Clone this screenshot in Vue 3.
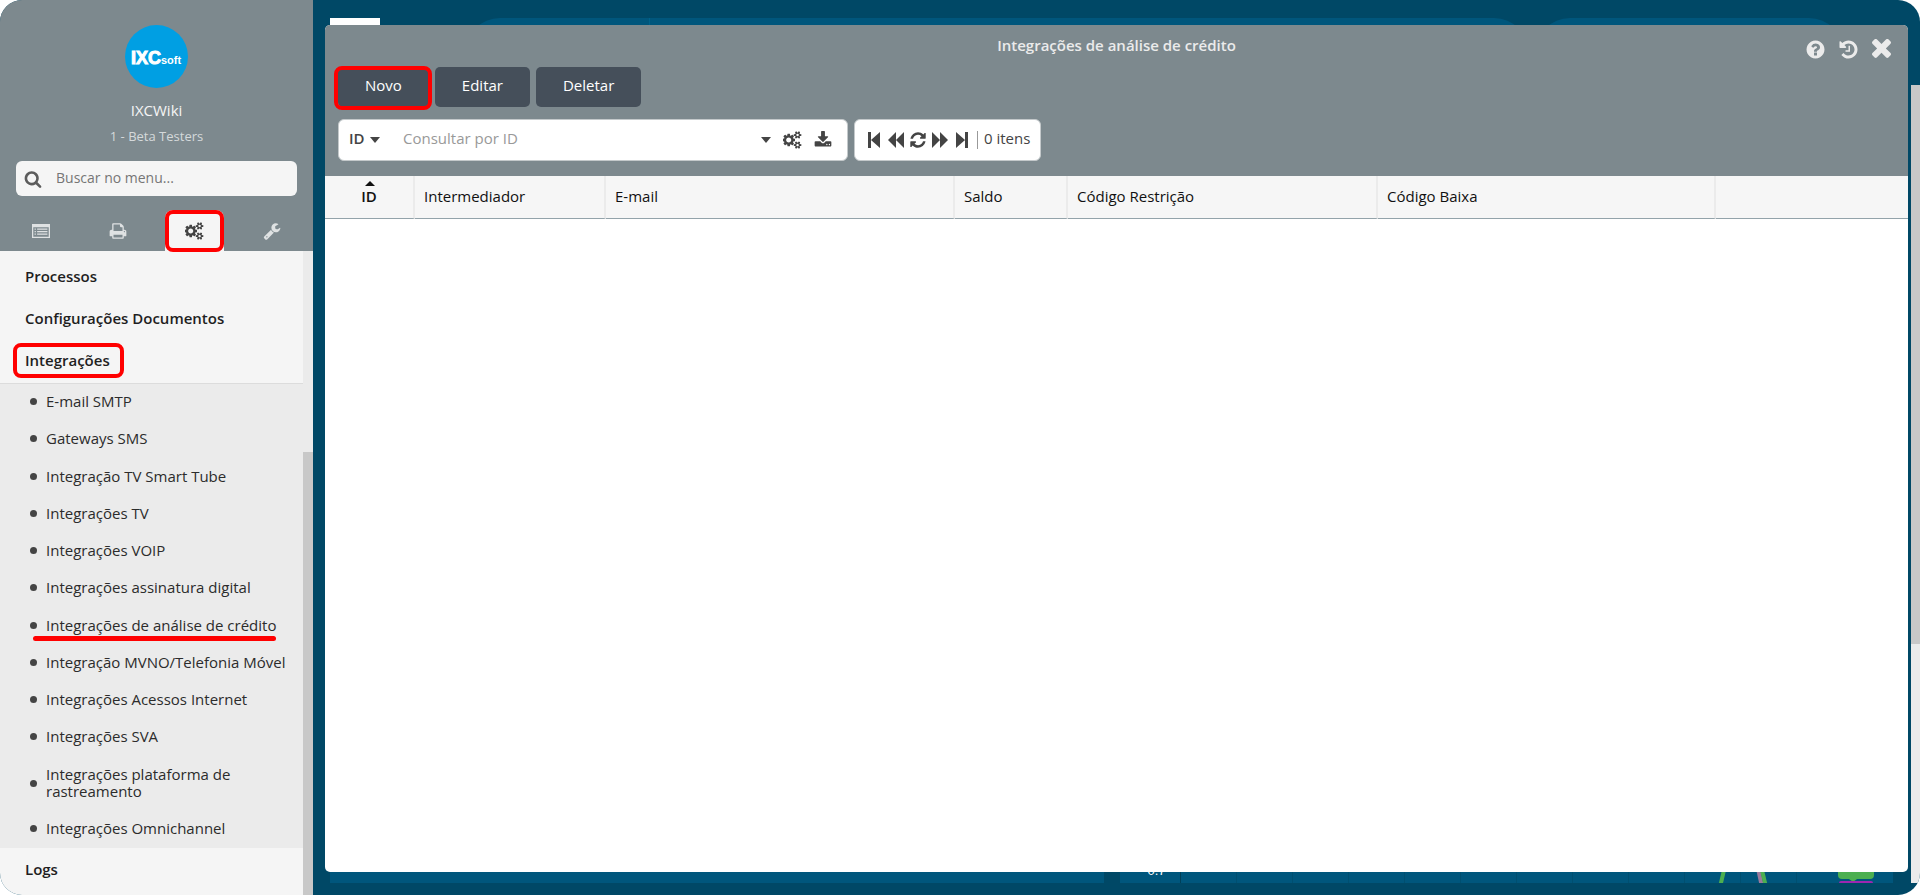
<script setup>
import { ref } from 'vue'

const cogs =
  'M832 896q0-106-75-181t-181-75-181 75-75 181 75 181 181 75 181-75 75-181zm768 512q0-52-38-90t-90-38-90 38-38 90q0 53 37.5 90.5t90.5 37.5 90.5-37.5 37.5-90.5zm0-1024q0-52-38-90t-90-38-90 38-38 90q0 53 37.5 90.5t90.5 37.5 90.5-37.5 37.5-90.5zm-384 421v185q0 10-7 19.5t-16 10.5l-155 24q-11 35-32 76 34 48 90 115 7 11 7 20 0 12-7 19-23 30-82.5 89.5t-78.5 59.5q-11 0-21-7l-115-90q-37 19-77 31-11 108-23 155-7 24-30 24h-186q-11 0-20-7.5t-10-17.5l-23-153q-34-10-75-31l-118 89q-7 7-20 7-11 0-21-8-144-133-144-160 0-9 7-19 10-14 41-53t47-61q-23-44-35-82l-152-24q-10-1-17-9.5t-7-19.5v-185q0-10 7-19.5t16-10.5l155-24q11-35 32-76-34-48-90-115-7-11-7-20 0-12 7-20 22-30 82-89t79-59q11 0 21 7l115 90q34-18 77-32 11-108 23-154 7-24 30-24h186q11 0 20 7.5t10 17.5l23 153q34 10 75 31l118-89q8-7 20-7 11 0 21 8 144 133 144 160 0 8-7 19-12 16-42 54t-45 60q23 48 34 82l152 23q10 2 17 10.5t7 19.5zm640 533v140q0 16-149 31-12 27-30 52 51 113 51 138 0 4-4 7-122 71-124 71-8 0-46-47t-52-68q-20 2-30 2t-30-2q-14 21-52 68t-46 47q-2 0-124-71-4-3-4-7 0-25 51-138-18-25-30-52-149-15-149-31v-140q0-16 149-31 13-29 30-52-51-113-51-138 0-4 4-7 4-2 35-20t59-34 30-16q8 0 46 46.5t52 67.5q20-2 30-2t30 2q51-71 92-112l6-2q4 0 124 70 4 3 4 7 0 25-51 138 17 23 30 52 149 15 149 31zm0-1024v140q0 16-149 31-12 27-30 52 51 113 51 138 0 4-4 7-122 71-124 71-8 0-46-47t-52-68q-20 2-30 2t-30-2q-14 21-52 68t-46 47q-2 0-124-71-4-3-4-7 0-25 51-138-18-25-30-52-149-15-149-31v-140q0-16 149-31 13-29 30-52-51-113-51-138 0-4 4-7 4-2 35-20t59-34 30-16q8 0 46 46.5t52 67.5q20-2 30-2t30 2q51-71 92-112l6-2q4 0 124 70 4 3 4 7 0 25-51 138 17 23 30 52 149 15 149 31z'

const tabs = [
  {
    name: 'Cadastros',
    path: 'M0 192h1792v1408H0zM128 512v960h1536V512zM256 640h128v128H256zM256 896h128v128H256zM256 1152h128v128H256zM512 640h1024v128H512zM512 896h1024v128H512zM512 1152h1024v128H512z',
  },
  {
    name: 'Relatórios',
    path: 'M448 1536h896v-256h-896v256zm0-640h896v-384h-160q-40 0-68-28t-28-68v-160h-640v640zm1152 64q0-26-19-45t-45-19-45 19-19 45 19 45 45 19 45-19 19-45zm128 0v416q0 13-9.500 22.500t-22.500 9.500h-224v160q0 40-28 68t-68 28h-960q-40 0-68-28t-28-68v-160h-224q-13 0-22.500-9.500t-9.500-22.500v-416q0-79 56.500-135.500t135.500-56.500h64v-544q0-40 28-68t68-28h672q40 0 88 20t76 48l152 152q28 28 48 76t20 88v256h64q79 0 135.500 56.500t56.500 135.500z',
  },
  { name: 'Configurações', path: cogs, active: true },
  {
    name: 'Ferramentas',
    path: 'M448 1472q0-26-19-45t-45-19-45 19-19 45 19 45 45 19 45-19 19-45zm644-420l-682 682q-37 37-90 37-52 0-91-37l-106-108q-38-36-38-90 0-53 38-91l681-681q39 98 114.500 173.500t173.500 114.500zm634-435q0 39-23 106-47 134-164.500 217.500t-258.500 83.500q-185 0-316.500-131.500t-131.500-316.500 131.500-316.500 316.500-131.500q58 0 121.500 16.500t107.500 46.500q16 11 16 28t-16 28l-293 169v224l193 107q5-3 79-48.500t135.500-81 70.500-35.500q15 0 23.500 10t8.500 25z',
  },
]

const items = [
  'E-mail SMTP',
  'Gateways SMS',
  'Integração TV Smart Tube',
  'Integrações TV',
  'Integrações VOIP',
  'Integrações assinatura digital',
  'Integrações de análise de crédito',
  'Integração MVNO/Telefonia Móvel',
  'Integrações Acessos Internet',
  'Integrações SVA',
  'Integrações plataforma de rastreamento',
  'Integrações Omnichannel',
]

const pager = [
  { name: 'Primeira página', path: 'M3 1h3v16H3zM15 1v16L6 9z' },
  { name: 'Página anterior', path: 'M9 1v16L1 9zM17 1v16L9 9z' },
  { name: 'Atualizar', refresh: true },
  { name: 'Próxima página', path: 'M1 1v16l8-8zM9 1v16l8-8z' },
  { name: 'Última página', path: 'M12 1h3v16h-3zM3 1v16l9-8z' },
]

const columns = ['Intermediador', 'E-mail', 'Saldo', 'Código Restrição', 'Código Baixa', '']
const field = ref('ID')
const query = ref('')
const menuQuery = ref('')
</script>

<template>
  <div class="shell">
    <aside class="sidebar">
      <header class="profile">
        <svg class="logo" viewBox="0 0 63 63" role="img" aria-label="IXCsoft">
          <circle cx="31.500" cy="31.500" r="31.500" fill="#009fe3" />
          <text class="logo-main" x="6" y="39">IXC</text>
          <text class="logo-sub" x="36" y="39">soft</text>
        </svg>
        <div class="user">IXCWiki</div>
        <div class="branch">1 - Beta Testers</div>
        <label class="menu-search">
          <svg viewBox="0 0 1792 1792" aria-hidden="true">
            <path
              d="M1216 832q0-185-131.500-316.500t-316.500-131.500-316.500 131.500-131.500 316.500 131.500 316.500 316.500 131.500 316.500-131.500 131.500-316.500zm512 832q0 52-38 90t-90 38q-54 0-90-38l-343-342q-179 124-399 124-143 0-273.500-55.500t-225-150-150-225-55.500-273.500 55.500-273.500 150-225 225-150 273.500-55.500 273.500 55.500 225 150 150 225 55.500 273.500q0 220-124 399l343 343q37 37 37 90z"
            />
          </svg>
          <input v-model="menuQuery" type="text" placeholder="Buscar no menu..." aria-label="Buscar no menu" />
        </label>
        <div class="tabs">
          <button
            v-for="tab in tabs"
            :key="tab.name"
            type="button"
            class="tab"
            :class="{ active: tab.active }"
            :aria-label="tab.name"
          >
            <svg :viewBox="tab.active ? '0 0 1920 1792' : '0 0 1792 1792'" fill-rule="evenodd">
              <path :d="tab.path" />
            </svg>
          </button>
        </div>
      </header>
      <div class="menu-area">
        <nav class="menu">
          <a class="group" href="#">Processos</a>
          <a class="group" href="#">Configurações Documentos</a>
          <a class="group" href="#"><span class="marked">Integrações</span></a>
          <ul>
            <li v-for="item in items" :key="item">
              <a href="#" :class="{ underlined: item === 'Integrações de análise de crédito' }">{{ item }}</a>
            </li>
          </ul>
          <a class="group" href="#">Logs</a>
        </nav>
        <div class="track"><div class="thumb"></div></div>
      </div>
    </aside>

    <main class="desktop">
      <div class="backdrop">
        <div class="back-top">
          <span class="back-tab"></span>
          <span class="pill pill-wide"></span>
          <span class="pill pill-short"></span>
        </div>
        <div class="back-bottom">
          <div class="panel"></div>
          <div class="panel chart">
            <span class="axis">0.7</span>
            <div class="gridlines"></div>
            <svg class="series" viewBox="0 0 180 30" aria-hidden="true">
              <path d="M7 34L17 -8" stroke="#4caf50" stroke-width="4" />
              <path d="M49 34L40 -8" stroke="#9b7a9c" stroke-width="4" />
              <path d="M53 34L43 -8" stroke="#4caf50" stroke-width="4" />
              <rect x="125" y="0" width="36" height="26" rx="4" fill="#4caf50" />
              <path d="M136 26h8l-4 3z" fill="#4caf50" />
              <rect x="126" y="28" width="34" height="8" rx="2" fill="#9c27b0" />
            </svg>
          </div>
        </div>
      </div>
      <div class="page-track"><div class="page-thumb"></div></div>

      <section class="window">
        <header class="window-head">
          <div class="title-row">
            <h1>Integrações de análise de crédito</h1>
            <div class="window-actions">
              <button type="button" aria-label="Ajuda">
                <svg viewBox="0 0 1792 1792">
                  <path
                    d="M1024 1376v-192q0-14-9-23t-23-9h-192q-14 0-23 9t-9 23v192q0 14 9 23t23 9h192q14 0 23-9t9-23zm256-672q0-88-55.500-163t-138.500-116-170-41q-243 0-371 213-15 24 8 42l132 100q7 6 19 6 16 0 25-12 53-68 86-92 34-24 86-24 48 0 85.500 26t37.500 59q0 38-20 61t-68 45q-63 28-115.500 86.500t-52.500 125.500v36q0 14 9 23t23 9h192q14 0 23-9t9-23q0-19 21.500-49.500t54.500-49.500q32-18 49-28.500t46-35 44.500-48 28-60.500 12.500-81zm384 192q0 209-103 385.500t-279.500 279.500-385.500 103-385.500-103-279.500-279.500-103-385.500 103-385.500 279.500-279.500 385.500-103 385.500 103 279.500 279.500 103 385.500z"
                  />
                </svg>
              </button>
              <button type="button" aria-label="Histórico">
                <svg viewBox="0 0 1792 1792">
                  <path
                    d="M1664 896q0 156-61 298t-164 245-245 164-298 61q-172 0-327-72.500t-264-204.500q-7-10-6.500-22.500t8.500-20.500l137-138q10-9 25-9 16 2 23 12 73 95 179 147t225 52q104 0 198.500-40.500t163.500-109.500 109.500-163.500 40.500-198.500-40.500-198.500-109.500-163.500-163.500-109.500-198.500-40.500q-98 0-188 35.500t-160 101.500l137 138q31 30 14 69-17 40-59 40h-448q-26 0-45-19t-19-45v-448q0-42 40-59 39-17 69 14l130 129q107-101 244.500-156.500t284.500-55.500q156 0 298 61t245 164 164 245 61 298zm-640-288v448q0 14-9 23t-23 9h-320q-14 0-23-9t-9-23v-64q0-14 9-23t23-9h224v-352q0-14 9-23t23-9h64q14 0 23 9t9 23z"
                  />
                </svg>
              </button>
              <button type="button" class="close" aria-label="Fechar">
                <svg viewBox="240 240 1312 1312">
                  <path
                    transform="translate(0 -132)"
                    d="M1490 1322q0 40-28 68l-136 136q-28 28-68 28t-68-28l-294-294-294 294q-28 28-68 28t-68-28l-136-136q-28-28-28-68t28-68l294-294-294-294q-28-28-28-68t28-68l136-136q28-28 68-28t68 28l294 294 294-294q28-28 68-28t68 28l136 136q28 28 28 68t-28 68l-294 294 294 294q28 28 28 68z"
                  />
                </svg>
              </button>
            </div>
          </div>
          <div class="buttons">
            <button type="button" class="action highlighted">Novo</button>
            <button type="button" class="action">Editar</button>
            <button type="button" class="action">Deletar</button>
          </div>
          <div class="toolbar">
            <div class="query">
              <label class="field">
                <select v-model="field" aria-label="Campo de consulta">
                  <option>ID</option>
                </select>
                <svg class="caret" viewBox="0 0 10 6" aria-hidden="true"><path d="M0 0h10L5 6z" /></svg>
              </label>
              <input v-model="query" type="text" placeholder="Consultar por ID" aria-label="Consultar por ID" />
              <button type="button" class="tool" aria-label="Opções">
                <svg class="caret" viewBox="0 0 10 6"><path d="M0 0h10L5 6z" /></svg>
              </button>
              <button type="button" class="tool" aria-label="Configurar">
                <svg class="cogs" viewBox="0 0 1920 1792"><path :d="cogs" /></svg>
              </button>
              <button type="button" class="tool" aria-label="Exportar">
                <svg class="export" viewBox="0 0 1792 1792">
                  <path
                    d="M1344 1344q0-26-19-45t-45-19-45 19-19 45 19 45 45 19 45-19 19-45zm256 0q0-26-19-45t-45-19-45 19-19 45 19 45 45 19 45-19 19-45zm128-224v320q0 40-28 68t-68 28h-1472q-40 0-68-28t-28-68v-320q0-40 28-68t68-28h465l135 136q58 56 136 56t136-56l136-136h464q40 0 68 28t28 68zm-325-569q17 41-14 70l-448 448q-18 19-45 19t-45-19l-448-448q-31-29-14-70 17-39 59-39h256v-448q0-26 19-45t45-19h256q26 0 45 19t19 45v448h256q42 0 59 39z"
                  />
                </svg>
              </button>
            </div>
            <div class="pager">
              <button v-for="p in pager" :key="p.name" type="button" :aria-label="p.name">
                <svg v-if="p.refresh" viewBox="0 0 1792 1792">
                  <path
                    d="M1639 1056q0 5-1 7-64 268-268 434.500t-478 166.500q-146 0-282.500-55t-243.500-157l-129 129q-19 19-45 19t-45-19-19-45v-448q0-26 19-45t45-19h448q26 0 45 19t19 45-19 45l-137 137q71 66 161 102t187 36q134 0 250-65t186-179q11-17 53-117 8-23 30-23h192q13 0 22.500 9.500t9.500 22.500zm25-800v448q0 26-19 45t-45 19h-448q-26 0-45-19t-19-45 19-45l138-138q-148-137-349-137-134 0-250 65t-186 179q-11 17-53 117-8 23-30 23h-199q-13 0-22.500-9.500t-9.500-22.500v-7q65-268 270-434.500t480-166.500q146 0 284 55.500t245 156.500l130-129q19-19 45-19t45 19 19 45z"
                  />
                </svg>
                <svg v-else viewBox="0 0 18 18"><path :d="p.path" /></svg>
              </button>
              <span class="count">0 itens</span>
            </div>
          </div>
        </header>
        <table>
          <colgroup>
            <col class="c-id" />
            <col class="c-inter" />
            <col class="c-mail" />
            <col class="c-saldo" />
            <col class="c-restr" />
            <col class="c-baixa" />
            <col />
          </colgroup>
          <thead>
            <tr>
              <th class="sorted" scope="col">
                ID
                <svg viewBox="0 0 10 5" aria-hidden="true"><path d="M0 5L5 0l5 5z" /></svg>
              </th>
              <th v-for="(c, i) in columns" :key="i" scope="col">{{ c }}</th>
            </tr>
          </thead>
        </table>
      </section>
    </main>
  </div>
</template>

<style>
body {
  margin: 0;
  background: #fff;
}
</style>

<style scoped>
.shell {
  display: flex;
  height: 100vh;
  overflow: hidden;
  border-radius: 22px;
  background: #004866;
  font-family: 'Open Sans', 'Noto Sans', sans-serif;
  font-size: 15px;
  color: #2c2c2c;
}
.shell *,
.shell *::before,
.shell *::after {
  box-sizing: border-box;
}
button,
input,
select {
  margin: 0;
  padding: 0;
  border: 0;
  background: none;
  color: inherit;
  font: inherit;
  appearance: none;
  outline: none;
}
svg {
  display: block;
  fill: currentColor;
}
a {
  color: inherit;
  text-decoration: none;
}

/* sidebar */
.sidebar {
  display: flex;
  flex: none;
  flex-direction: column;
  width: 313px;
}
.profile {
  display: flex;
  flex-direction: column;
  align-items: center;
  padding: 25px 0 0;
  background: #7d898e;
  color: #f5f5f5;
}
.logo {
  width: 63px;
  height: 63px;
}
.logo text {
  fill: #fff;
  stroke: #fff;
  font-family: 'Liberation Sans', sans-serif;
  font-weight: 700;
}
.logo-main {
  font-size: 18px;
}
.logo-sub {
  font-size: 11px;
  stroke-width: 0;
}
.user {
  margin-top: 12px;
  font-weight: 500;
  line-height: 20px;
}
.branch {
  margin-top: 7px;
  color: #d5d9db;
  font-size: 13px;
  line-height: 18px;
}
.menu-search {
  display: flex;
  align-items: center;
  align-self: stretch;
  gap: 14px;
  height: 35px;
  margin: 16px 16px 0;
  padding: 0 8px;
  border-radius: 6px;
  background: #f5f5f5;
  color: #5c5c5c;
}
.menu-search svg {
  flex: none;
  width: 18px;
  height: 18px;
}
.menu-search input {
  flex: 1;
  min-width: 0;
  padding-bottom: 2px;
  font-size: 14px;
}
.menu-search input::placeholder {
  color: #757575;
  opacity: 1;
}
.tabs {
  display: flex;
  align-self: stretch;
  justify-content: space-between;
  height: 41px;
  margin-top: 14px;
  padding: 0 12px 0 11px;
}
.tab {
  position: relative;
  display: flex;
  align-items: center;
  justify-content: center;
  width: 59px;
  color: #dfe2e3;
}
.tab svg {
  width: 18px;
  height: 18px;
}
.tab.active {
  background: #f5f5f5;
  color: #444;
  border-radius: 8px 8px 0 0;
}
.tab.active svg {
  width: 19px;
}
.tab.active::after {
  content: '';
  position: absolute;
  inset: 0 0 -1px;
  border: 4px solid #f00;
  border-radius: 8px;
}
.menu-area {
  display: flex;
  flex: 1;
  min-height: 0;
}
.menu {
  flex: 1;
  min-width: 0;
  padding-top: 4px;
  overflow: hidden;
  background: #f5f5f5;
}
.group {
  display: block;
  padding-left: 25px;
  color: #1f1f1f;
  font-weight: 600;
  line-height: 42px;
}
.marked {
  position: relative;
}
.marked::after {
  content: '';
  position: absolute;
  inset: -7px -14px -8px -12px;
  border: 4px solid #f00;
  border-radius: 8px;
}
.menu ul {
  margin: 2px 0 0;
  padding: 0;
  border-top: 1px solid #dcdcdc;
  background: #ebebeb;
  list-style: none;
}
.menu li {
  display: flex;
  align-items: center;
  gap: 9px;
  padding: 9px 12px 11px 30px;
  line-height: 17px;
}
.menu li:nth-child(4n + 3) {
  margin-top: 1px;
}
.menu li::before {
  content: '';
  flex: none;
  width: 7px;
  height: 7px;
  border-radius: 50%;
  background: #444;
}
.underlined {
  position: relative;
}
.underlined::after {
  content: '';
  position: absolute;
  right: 0;
  bottom: -7px;
  left: -13px;
  height: 5px;
  border-radius: 3px;
  background: #f00;
}
.track {
  width: 10px;
  padding-top: 201px;
  background: #ebebeb;
}
.thumb {
  height: 100%;
  background: #c8c8c8;
}

/* desktop behind the window */
.desktop {
  position: relative;
  flex: 1;
  min-width: 0;
}
.backdrop {
  display: flex;
  flex-direction: column;
  justify-content: space-between;
  height: 100%;
  padding: 18px 27px 12px 17px;
}
.back-top {
  display: flex;
}
.back-tab {
  width: 50px;
  height: 40px;
  margin-right: 85px;
  background: #fff;
}
.pill {
  height: 70px;
  border-radius: 35px;
  background: #00567c;
}
.pill-wide {
  flex: 1;
  margin-right: 6px;
  background: linear-gradient(90deg, transparent 184px, #00628a 184px, #00628a 185px, transparent 185px) #00567c;
}
.pill-short {
  width: 309px;
  margin-right: 49px;
}
.back-bottom {
  display: flex;
  gap: 16px;
}
.panel {
  flex: 1;
  height: 30px;
  background: #00567c;
}
.chart {
  position: relative;
  display: flex;
}
.axis {
  width: 60px;
  padding: 8px 14px 0 0;
  color: #fff;
  font-family: 'Liberation Sans', sans-serif;
  font-size: 13px;
  line-height: 20px;
  text-align: right;
}
.gridlines {
  flex: 1;
  border-left: 1px solid #004058;
  background: repeating-linear-gradient(90deg, transparent 0 55px, #004f70 55px 56px);
}
.series {
  position: absolute;
  right: 0;
  bottom: 0;
  width: 180px;
  height: 30px;
  fill: none;
}
.page-track {
  position: absolute;
  top: 85px;
  right: 0;
  bottom: 12px;
  width: 9px;
  background: #ebebeb;
}
.page-thumb {
  height: 70%;
  background: #c8c8c8;
}

/* window */
.window {
  position: absolute;
  inset: 25px 12px 23px;
  overflow: hidden;
  border-radius: 5px;
  background: #fff;
}
.window-head {
  padding-bottom: 15px;
  background: #7d898e;
}
.title-row {
  position: relative;
  height: 42px;
  padding-top: 9px;
}
h1 {
  margin: 0;
  color: #ebebeb;
  font-size: 15px;
  font-weight: 600;
  line-height: 22px;
  text-align: center;
}
.window-actions {
  position: absolute;
  top: 14px;
  right: 16px;
  display: flex;
  align-items: center;
  gap: 12px;
  color: #ebebeb;
}
.window-actions svg {
  width: 21px;
  height: 21px;
}
.buttons {
  display: flex;
  gap: 6px;
  padding: 0 13px;
}
.action {
  position: relative;
  height: 40px;
  padding: 0 27px 4px;
  border-radius: 5px;
  background: #454f5a;
  color: #fff;
  font-weight: 500;
}
.highlighted::after {
  content: '';
  position: absolute;
  inset: -1px -3px -3px -4px;
  border: 4px solid #f00;
  border-radius: 8px;
}
.toolbar {
  display: flex;
  gap: 6px;
  margin-top: 12px;
  padding: 0 13px;
  color: #444;
}
.query,
.pager {
  display: flex;
  align-items: center;
  height: 42px;
  border: 1px solid #c4c9cb;
  border-radius: 6px;
  background: #fff;
}
.query {
  width: 510px;
  padding: 0 15px 0 10px;
}
.query input {
  flex: 1;
  min-width: 0;
  padding-bottom: 4px;
}
.query input::placeholder {
  color: #999;
  opacity: 1;
}
.field {
  display: flex;
  align-items: center;
  gap: 5px;
  margin-right: 23px;
}
.field select {
  padding-bottom: 4px;
  font-weight: 600;
}
.caret {
  width: 10px;
  height: 6px;
}
.tool {
  margin-left: 12px;
}
.cogs {
  width: 19px;
  height: 18px;
}
.export {
  width: 18px;
  height: 18px;
}
.pager {
  gap: 4px;
  padding: 0 10px;
}
.pager svg {
  width: 18px;
  height: 18px;
}
.count {
  margin-left: 2px;
  padding: 0 0 3px 6px;
  border-left: 1px solid #999;
  line-height: 15px;
}
table {
  width: 100%;
  border-collapse: separate;
  border-spacing: 0;
  table-layout: fixed;
  background: #f6f6f6;
  color: #111;
}
.c-id {
  width: 90px;
}
.c-inter {
  width: 191px;
}
.c-mail {
  width: 349px;
}
.c-saldo {
  width: 113px;
}
.c-restr {
  width: 310px;
}
.c-baixa {
  width: 338px;
}
th {
  position: relative;
  height: 43px;
  padding: 0 0 2px 9px;
  border-right: 2px solid #ebebeb;
  border-bottom: 1px solid #93a3aa;
  font-weight: 400;
  text-align: left;
}
th:last-child {
  border-right: 0;
}
.sorted {
  padding: 0 0 2px;
  font-weight: 600;
  text-align: center;
}
.sorted svg {
  position: absolute;
  top: 5px;
  left: 40px;
  width: 10px;
  height: 5px;
}
</style>
